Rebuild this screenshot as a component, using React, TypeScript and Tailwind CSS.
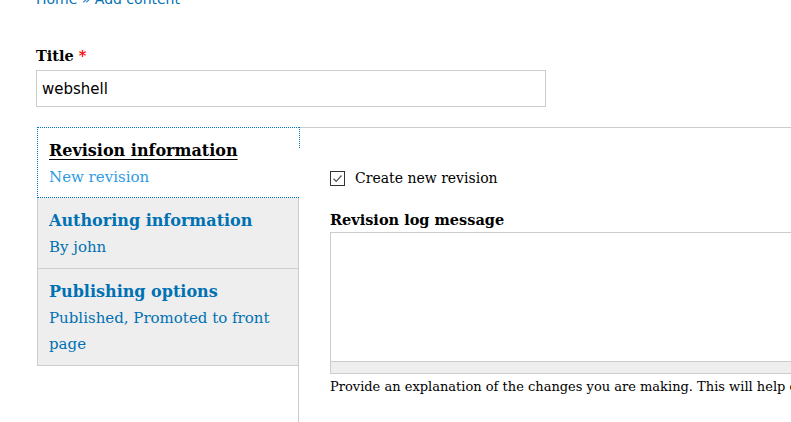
import React from "react";

// Drupal-style "Add content" form: title field + vertical tabs (revision info).
const serif = "font-['DejaVu_Serif',serif]";
const sans = "font-['DejaVu_Sans',sans-serif]";

type Tab = { title: string; summary: string[]; active?: boolean };

const tabs: Tab[] = [
  { title: "Revision information", summary: ["New revision"], active: true },
  { title: "Authoring information", summary: ["By john"] },
  { title: "Publishing options", summary: ["Published, Promoted to front", "page"] },
];

function TabItem({ tab }: { tab: Tab }) {
  if (tab.active) {
    return (
      <li className="relative z-10 w-[262px] border-y border-l border-dotted border-[#0074bd] bg-white pb-[7px] pl-[11px] pt-[10px]">
        <span className="absolute -right-px -top-px h-[21px] border-r border-dotted border-[#0074bd]" />
        <div className="text-[16px] font-bold leading-[26px] text-black underline decoration-1 underline-offset-[3px]">
          {tab.title}
        </div>
        {tab.summary.map((s) => (
          <div key={s} className="text-[15px] leading-[26px] text-[#2f9be4]">
            {s}
          </div>
        ))}
      </li>
    );
  }
  return (
    <li className="w-[262px] border-x border-b border-[#cccccc] bg-[#eeeeee] pb-[8px] pl-[11px] pt-[10px]">
      <div className="text-[16px] font-bold leading-[26px] text-[#0071b3]">{tab.title}</div>
      {tab.summary.map((s) => (
        <div key={s} className="text-[15px] leading-[26px] text-[#0071b3]">
          {s}
        </div>
      ))}
    </li>
  );
}

export default function App() {
  return (
    <div className={`h-[422px] w-[791px] overflow-hidden bg-white ${serif} text-[14px] text-black`}>
      <div className={`-mt-[11px] pl-[36px] ${sans} text-[14px] leading-[20px] text-[#0071b3]`}>
        Home » Add content
      </div>

      <div className="mt-[37px] pl-[36px]">
        <label className="block text-[14.5px] font-bold leading-[20px]">
          Title <span className="text-[#ff0000]">*</span>
        </label>
        <input
          readOnly
          value="webshell"
          className={`mt-[4px] h-[37px] w-[510px] border border-[#cccccc] px-[5px] ${sans} text-[15px] text-black outline-none`}
        />
      </div>

      <div className="mt-[20px] flex items-start pl-[37px]">
        <ul className="flex flex-col">
          {tabs.map((t) => (
            <TabItem key={t.title} tab={t} />
          ))}
        </ul>

        <div className="-ml-px h-[300px] flex-1 border-l border-t border-[#cccccc] pl-[31px] pt-[40px]">
          <label className="flex items-center gap-[10px] leading-[20px]">
            <span className="flex h-[15px] w-[15px] items-center justify-center border border-[#333333] bg-white">
              <svg viewBox="0 0 13 13" className="h-[13px] w-[13px]">
                <path d="M2.5 6.8 L5.2 9.3 L10.5 3.5" fill="none" stroke="#555555" strokeWidth="1.2" />
              </svg>
            </span>
            Create new revision
          </label>

          <div className="mt-[22px] text-[14.5px] font-bold leading-[20px]">Revision log message</div>
          <div className="mt-[2px] w-[600px] border border-[#cccccc]">
            <div className="h-[128px] bg-white" />
            <div className="h-[12px] border-t border-[#cccccc] bg-[#eeeeee]" />
          </div>
          <p className="mt-[3px] whitespace-nowrap text-[13px] leading-[20px]">
            Provide an explanation of the changes you are making. This will help other authors understand your motivations.
          </p>
        </div>
      </div>
    </div>
  );
}
